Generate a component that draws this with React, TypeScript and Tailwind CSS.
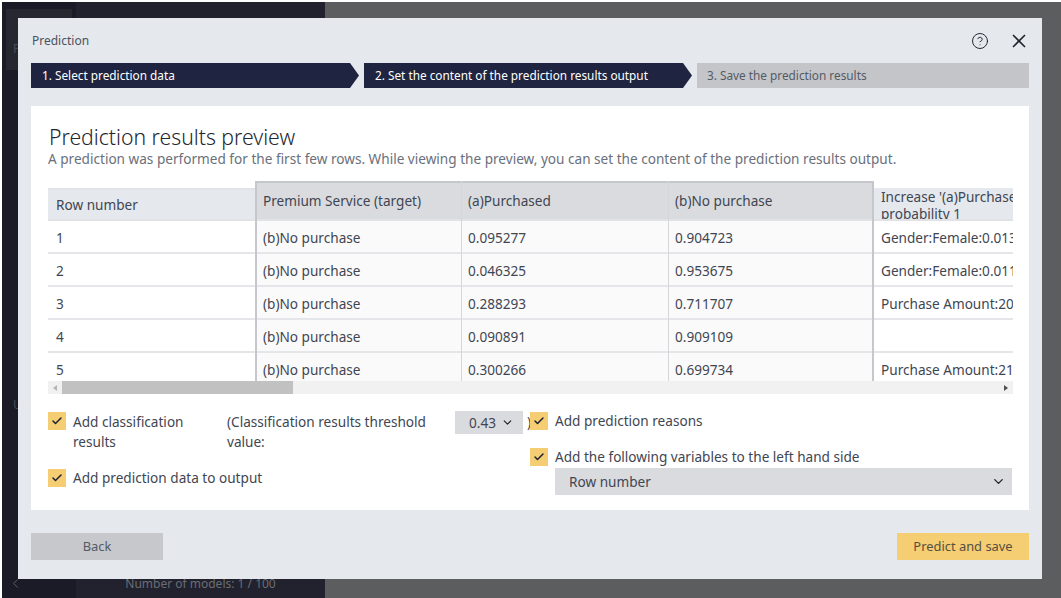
import { Check, ChevronDown, ChevronLeft, X, CircleHelp } from "lucide-react";

const rows = [
  { n: "1", a: "0.095277", b: "0.904723", why: "Gender:Female:0.013" },
  { n: "2", a: "0.046325", b: "0.953675", why: "Gender:Female:0.011" },
  { n: "3", a: "0.288293", b: "0.711707", why: "Purchase Amount:20" },
  { n: "4", a: "0.090891", b: "0.909109", why: "" },
  { n: "5", a: "0.300266", b: "0.699734", why: "Purchase Amount:21" },
];

function Box() {
  return (
    <span className="flex h-[18px] w-[18px] shrink-0 items-center justify-center bg-[#f5cd73] text-[#1d2030]">
      <Check size={12} strokeWidth={3} />
    </span>
  );
}

function Cell({ children, tint, pad }: { children?: React.ReactNode; tint?: boolean; pad?: string }) {
  return (
    <div
      className={`flex h-[33px] shrink-0 items-center overflow-hidden whitespace-nowrap border-b-2 border-[#e4e6ea] pt-[3px] ${
        pad ?? "pl-[6px]"
      } ${tint ? "bg-[#fafafa]" : "bg-white"}`}
    >
      {children}
    </div>
  );
}

export default function App() {
  return (
    <div
      className="relative flex h-[598px] w-[1061px] overflow-hidden border-l-2 border-t-2 border-white text-[13.6px] text-[#3f4652]"
      style={{ fontFamily: '"Noto Sans", sans-serif' }}
    >
      {/* app behind the dialog */}
      <div className="relative w-[74px] bg-[#1a1b26] pl-[4px] pt-[7px] text-[#4a4b55]">
        <div className="h-[61px] w-[66px] bg-[#262731]" />
        <span className="absolute left-[11px] top-[38px] text-[12px]">P</span>
        <span className="absolute left-[11px] top-[394px] text-[12px]">U</span>
        <ChevronLeft size={15} strokeWidth={1.6} className="absolute bottom-[7px] left-[6px] text-[#5d5e66]" />
      </div>
      <div className="flex w-[249px] items-end justify-center bg-[#21222e] pb-[5px] text-[12px] text-[#6b6d74]">
        Number of models: 1 / 100
      </div>
      <div className="flex-1 bg-[#5c5d5f]" />

      {/* dialog */}
      <div className="absolute left-[16px] top-[16px] flex h-[561px] w-[1024px] flex-col bg-[#e5e8ed] px-[13px]">
        <div className="flex h-[45px] shrink-0 items-center justify-between">
          <span className="pl-[1px] text-[12px] text-[#4a5260]">Prediction</span>
          <div className="-mr-[1px] flex items-center gap-[19px] text-[#22252e]">
            <CircleHelp size={18} strokeWidth={1.3} />
            <X size={22} strokeWidth={1.8} />
          </div>
        </div>

        <div className="flex h-[25px] shrink-0 gap-[5px] text-[11.8px]">
          <div className="flex w-[328px] items-center bg-[#1f2540] pl-[11px] text-white [clip-path:polygon(0_0,319px_0,100%_50%,319px_100%,0_100%)]">
            1. Select prediction data
          </div>
          <div className="flex w-[328px] items-center bg-[#1f2540] pl-[11px] text-white [clip-path:polygon(0_0,319px_0,100%_50%,319px_100%,0_100%)]">
            2. Set the content of the prediction results output
          </div>
          <div className="flex flex-1 items-center bg-[#c3c5c9] pl-[10px] text-[#555b66]">
            3. Save the prediction results
          </div>
        </div>

        <div className="mt-[18px] flex h-[404px] shrink-0 flex-col bg-white px-[17px] pt-[17px]">
          <h1 className="pl-[1px] text-[21.2px] font-light leading-[28px] text-[#23262f]">Prediction results preview</h1>
          <p className="whitespace-nowrap text-[13.6px] leading-[16px] text-[#6a707b]">
            A prediction was performed for the first few rows. While viewing the preview, you can set the content of the prediction results output.
          </p>

          <div className="mt-[14px] flex h-[200px] w-[965px] shrink-0 overflow-hidden">
            <div className="flex w-[207px] shrink-0 flex-col pt-[7px]">
              <div className="flex h-[33px] shrink-0 items-center border-y-2 border-[#e0e2e6] bg-[#e5e8ed] pl-[8px] pt-[2px]">Row number</div>
              {rows.map((r) => (
                <Cell key={r.n} pad="pl-[8px]">{r.n}</Cell>
              ))}
            </div>
            <div className="flex w-[206px] shrink-0 flex-col border-l-2 border-[#c5c7cc]">
              <div className="flex h-[40px] shrink-0 items-center border-y-2 border-t-[#c5c7cc] border-b-[#e0e2e6] bg-[#dadbdf] pl-[6px] pt-[1px]">Premium Service (target)</div>
              {rows.map((r) => (
                <Cell key={r.n} tint>(b)No purchase</Cell>
              ))}
            </div>
            <div className="flex w-[207px] shrink-0 flex-col border-l border-[#d5d6da]">
              <div className="flex h-[40px] shrink-0 items-center border-y-2 border-t-[#c5c7cc] border-b-[#e0e2e6] bg-[#dadbdf] pl-[6px] pt-[1px]">(a)Purchased</div>
              {rows.map((r) => (
                <Cell key={r.n} tint>{r.a}</Cell>
              ))}
            </div>
            <div className="flex w-[206px] shrink-0 flex-col border-l border-r-2 border-l-[#d5d6da] border-r-[#c5c7cc]">
              <div className="flex h-[40px] shrink-0 items-center border-y-2 border-t-[#c5c7cc] border-b-[#e0e2e6] bg-[#dadbdf] pl-[6px] pt-[1px]">(b)No purchase</div>
              {rows.map((r) => (
                <Cell key={r.n} tint>{r.b}</Cell>
              ))}
            </div>
            <div className="flex w-[240px] shrink-0 flex-col pt-[7px]">
              <div className="h-[33px] shrink-0 overflow-hidden whitespace-nowrap border-b-2 border-[#e0e2e6] bg-[#e5e8ed] pl-[7px] leading-[17px]">
                Increase '(a)Purchased'
                <br />
                probability 1
              </div>
              {rows.map((r) => (
                <Cell key={r.n} pad="pl-[7px]">{r.why}</Cell>
              ))}
            </div>
          </div>

          {/* scrollbar */}
          <div className="relative flex h-[13px] w-[965px] shrink-0 items-center justify-between bg-[#f1f1f1] px-[5px]">
            <span className="h-0 w-0 border-y-[3px] border-r-[4px] border-y-transparent border-r-[#b5b5b5]" />
            <span className="absolute left-[14px] top-0 h-[13px] w-[231px] bg-[#c1c1c1]" />
            <span className="h-0 w-0 border-y-[3px] border-l-[4px] border-y-transparent border-l-[#505050]" />
          </div>

          <div className="mt-[18px] flex leading-[18px]">
            <div className="flex w-[482px] shrink-0 flex-col">
              <div className="flex items-start">
                <Box />
                <span className="ml-[7px] w-[154px] shrink-0 leading-[20px]">Add classification results</span>
                <span className="w-[228px] shrink-0 pr-[20px] leading-[20px]">(Classification results threshold value:</span>
                <div className="-mt-[1px] flex h-[23px] w-[68px] shrink-0 items-center gap-[5px] bg-[#dadbdf] pl-[14px]">
                  0.43 <ChevronDown size={13} strokeWidth={2.2} className="text-[#22252e]" />
                </div>
                <span className="ml-[4px] leading-[20px]">)</span>
              </div>
              <div className="mt-[17px] flex items-center gap-[7px]">
                <Box />
                <span>Add prediction data to output</span>
              </div>
            </div>
            <div className="flex flex-1 flex-col">
              <div className="flex items-center gap-[7px]">
                <Box />
                <span>Add prediction reasons</span>
              </div>
              <div className="mt-[18px] flex items-center gap-[7px]">
                <Box />
                <span>Add the following variables to the left hand side</span>
              </div>
              <div className="ml-[25px] mt-[2px] flex h-[27px] items-center justify-between bg-[#dadbdf] pl-[14px] pr-[6px]">
                Row number
                <ChevronDown size={15} strokeWidth={2.2} className="text-[#22252e]" />
              </div>
            </div>
          </div>
        </div>

        <div className="mt-[23px] flex justify-between text-[12.9px]">
          <button className="flex h-[27px] w-[132px] items-center justify-center bg-[#c6c8cc] text-[#555b66]">Back</button>
          <button className="flex h-[27px] w-[132px] items-center justify-center bg-[#f5cd73] text-[#555040]">Predict and save</button>
        </div>
      </div>
    </div>
  );
}
